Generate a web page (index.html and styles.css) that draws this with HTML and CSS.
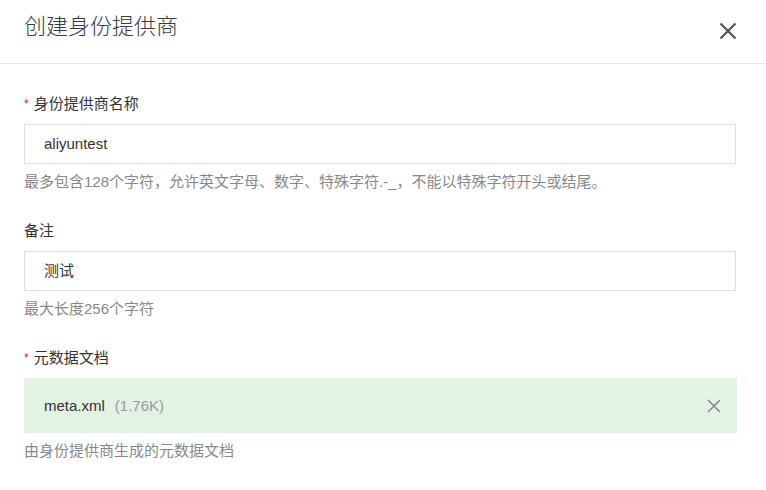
FILE: index.html
```html
<!DOCTYPE html>
<html lang="zh-CN">
<head>
<meta charset="utf-8">
<title>创建身份提供商</title>
<link rel="stylesheet" href="styles.css">
</head>
<body>
<div class="dialog">
  <div class="header">
    <div class="title">创建身份提供商</div>
    <svg class="close" width="18" height="18" viewBox="0 0 18 18" aria-label="关闭">
      <path d="M1.5 1.5 L16.5 16.5 M16.5 1.5 L1.5 16.5" stroke="#505559" stroke-width="2.2" fill="none"/>
    </svg>
  </div>
  <div class="body">
    <div class="item">
      <div class="label"><span class="req">*</span>身份提供商名称</div>
      <div class="input">aliyuntest</div>
      <div class="help">最多包含128个字符，允许英文字母、数字、特殊字符.-_，不能以特殊字符开头或结尾。</div>
    </div>
    <div class="item">
      <div class="label">备注</div>
      <div class="input">测试</div>
      <div class="help">最大长度256个字符</div>
    </div>
    <div class="item">
      <div class="label"><span class="req">*</span>元数据文档</div>
      <div class="file">
        <span class="fname">meta.xml</span><span class="fsize">(1.76K)</span>
        <svg class="fclose" width="14" height="14" viewBox="0 0 14 14" aria-label="移除">
          <path d="M1 1 L13 13 M13 1 L1 13" stroke="#888" stroke-width="1.6" fill="none"/>
        </svg>
      </div>
      <div class="help">由身份提供商生成的元数据文档</div>
    </div>
  </div>
</div>
</body>
</html>
```

FILE: styles.css
```css
* { box-sizing: border-box; }
body {
  margin: 0;
  background: #fff;
  font-family: "Liberation Sans", "Noto Sans CJK SC", sans-serif;
  color: #333;
}
.header {
  height: 64px;
  border-bottom: 1px solid #e8e8e8;
  padding: 12px 29px 0 24px;
  display: flex;
  justify-content: space-between;
  align-items: flex-start;
}
.title {
  font-size: 22px;
  line-height: 30px;
  font-weight: 300;
  color: #373d41;
}
.close { margin-top: 10px; }
.body {
  padding: 30px 30px 0 24px;
}
.item { margin-bottom: 29px; }
.label {
  font-size: 15px;
  line-height: 20px;
  color: #333;
  margin-bottom: 10px;
}
.req {
  color: #e2231a;
  font-size: 12px;
  margin-right: 5px;
  vertical-align: 1px;
}
.input {
  height: 40px;
  border: 1px solid #dcdcdc;
  padding: 0 19px;
  font-size: 15px;
  line-height: 38px;
  color: #333;
}
.help {
  margin-top: 8px;
  font-size: 15px;
  line-height: 20px;
  color: #888;
}
.file {
  height: 55px;
  margin-right: -1px;
  background: #e2f2e5;
  display: flex;
  align-items: center;
  padding: 0 16px 0 20px;
  font-size: 15px;
}
.fname { color: #333; }
.fsize { color: #999; margin-left: 10px; flex: 1; }
.fclose { flex: none; }
```
